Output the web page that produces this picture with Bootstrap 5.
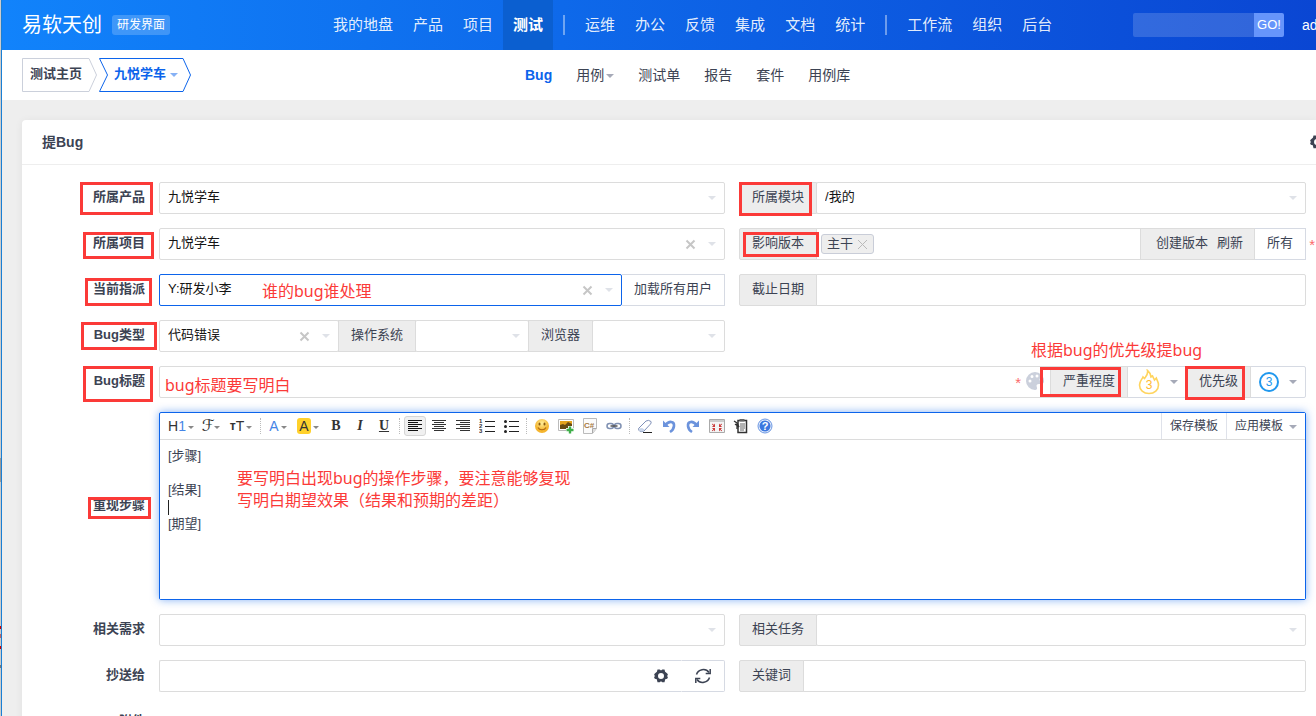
<!DOCTYPE html>
<html lang="zh-CN">
<head>
<meta charset="utf-8">
<meta name="viewport" content="width=device-width, initial-scale=1">
<title>提Bug - 易软天创</title>
<link href="https://cdn.jsdelivr.net/npm/bootstrap@5.3.0/dist/css/bootstrap.min.css" rel="stylesheet">
<style>
  :root { --ink: #3c4353; --line: #dcdcdc; --blue: #0c64eb; --note: #fb3a38; }
  body { font-family: "Liberation Sans", "Noto Sans CJK SC", sans-serif; font-size: 13px; line-height: 20px; color: var(--ink); background: #eee; }
  .app-shell { height: 100vh; overflow: hidden; }
  .window-edge { flex: 0 0 2px; border-right: 1px solid #1a7fd4; background: linear-gradient(#ccc 458px, #999 458px 482px, #ccc 482px 626px, #c00 626px 629px, #ccc 629px 634px, #b66 634px 638px, #ccc 638px 646px, #c00 646px 649px, #ccc 649px 665px, #777 665px 668px, #ccc 668px); }
  .app-main { flex: 1 1 0; min-width: 0; }

  /* top bar */
  .topbar { height: 50px; padding-left: 20px; background: linear-gradient(to right, #1183fb, #0a46d3); color: #fff; }
  .brand-area { flex: 0 0 301px; gap: 10px; }
  .brand-name { font-size: 20px; line-height: 50px; color: #fff; }
  .brand-tag { font-size: 12px; line-height: 20px; padding: 0 5px; border-radius: 3px; background: rgba(255,255,255,.2); color: #fff; }
  .topbar .nav-link { font-size: 15px; line-height: 50px; padding: 0 10px; color: rgba(255,255,255,.9); white-space: nowrap; }
  .topbar .nav-link.active { background: #0b5fd0; color: #fff; font-weight: 700; }
  .nav-split { width: 2px; height: 20px; margin: 0 10px; background: rgba(255,255,255,.4); }
  .search-box { width: 121px; height: 24px; border: 0; border-radius: 2px 0 0 2px; background: rgba(255,255,255,.16); color: #fff; }
  .search-go { width: 30px; height: 24px; padding: 0; border: 0; border-radius: 0 2px 2px 0; background: #6695fb; color: #fff; font-size: 13px; }
  .user-link { width: 14px; margin-left: 18px; overflow: hidden; white-space: nowrap; font-size: 14px; color: #fff; }

  /* second bar */
  .subbar { height: 50px; padding-left: 20px; background: #fff; }
  .crumb-area { flex: 0 0 491px; gap: 2px; }
  .crumb-item { height: 34px; line-height: 32px; padding-left: 8px; font-weight: 600; color: var(--ink); }
  .crumb-item svg { position: absolute; left: 0; top: 0; }
  .crumb-item span { position: relative; }
  .crumb-home { width: 75px; }
  .crumb-product { width: 92px; padding-left: 15px; color: var(--blue); }
  .subbar .nav-link { font-size: 14px; line-height: 20px; padding: 0 12px; color: var(--ink); }
  .subbar .nav-link.active { color: var(--blue); font-weight: 700; }
  .tri { display: inline-block; border: 4px solid transparent; border-top-color: #a6aab8; border-bottom: 0; vertical-align: middle; }
  .subbar .nav-link .tri { margin-left: 2px; }
  .crumb-product .tri { border-top-color: #86b1f5; }

  /* panel */
  .panel-box { margin: 20px 0 0 20px; background: #fff; border-radius: 4px 0 0 0; box-shadow: 0 1px 8px rgba(0,0,0,.06); min-height: 600px; }
  .panel-title { height: 45px; padding-left: 20px; border-bottom: 1px solid #eee; overflow: hidden; }
  .panel-title h1 { font-size: 14px; line-height: 20px; font-weight: 700; margin: 0; }
  .gear-link { width: 6px; height: 14px; overflow: hidden; color: var(--ink); }
  .gear-link svg { display: block; }
  .bug-form { display: grid; gap: 14px; padding: 17px 10px 0 0; }
  .field-line { display: grid; grid-template-columns: 123px minmax(0,566fr) minmax(0,567fr); column-gap: 14px; }
  .field-label { display: flex; align-items: center; justify-content: flex-end; position: relative; font-weight: 700; line-height: 30px; padding-bottom: 2px; }
  .field-wide { grid-column: span 2; position: relative; }

  .input-group, .pick-wrap { position: relative; min-height: 32px; }
  .form-control, .form-select, .input-group-text, .box-btn { height: 32px; font-size: 13px; line-height: 20px; border: 1px solid var(--line); border-radius: 2px; }
  .form-control, .form-select { padding: 4px 8px 6px; color: #141414; background-color: #fff; }
  .form-select { background-image: url("data:image/svg+xml,%3Csvg xmlns='http://www.w3.org/2000/svg' viewBox='0 0 8 4'%3E%3Cpath d='M0 0h8L4 4z' fill='%23dfe2e8'/%3E%3C/svg%3E"); background-size: 8px 4px; background-position: right 8px center; }
  .is-current { border-color: var(--blue); z-index: 2; }
  .input-group-text { padding: 4px 12px 6px; background: #ededed; color: var(--ink); position: relative; }
  .box-btn { padding: 4px 12px 6px; background: #fff; color: var(--ink); border-color: #d6dae3; margin-left: -1px; }
  .pick-wrap { flex: 1 1 0; min-width: 0; }
  .input-group > .pick-wrap:not(:first-child) { margin-left: -1px; }
  .grow-a { flex-grow: 180; } .grow-b { flex-grow: 114; } .grow-c { flex-grow: 133; }
  .clear-btn { position: absolute; right: 29px; top: 11px; width: 11px; height: 11px; padding: 0; border: 0; background: none; z-index: 3; display: flex; }
  .tag-area { flex: 1 1 0; border: 1px solid var(--line); margin-left: -1px; padding: 0 4px; height: 32px; }
  .tag-chip { height: 20px; line-height: 16px; padding: 0 5px; border: 1px solid #c9cdd8; border-radius: 3px; background: #eee; gap: 4px; }
  .tag-chip button { padding: 0; border: 0; background: none; display: flex; }
  .build-links { padding-left: 15px; padding-right: 11px; gap: 9px; }
  .build-links a { color: var(--ink); text-decoration: none; }
  .req-star { color: #fb6a6a; font-size: 15px; line-height: 20px; position: absolute; z-index: 4; }
  .star-out { right: -9px; top: 7px; }
  .star-in { right: 285px; top: 7px; }
  .palette-btn { position: absolute; right: 261px; top: 5px; width: 20px; height: 20px; padding: 0; border: 0; background: none; z-index: 4; display: flex; }
  .level-btn { width: 60px; padding: 0 8px 0 10px; display: flex; align-items: center; justify-content: space-between; }
  .prio-btn { width: 56px; padding: 0 8px; }
  .tool-btn { width: 44px; padding: 0; display: flex; align-items: center; justify-content: center; border-left-color: transparent; }

  /* rich text editor */
  .editor-box { border: 1px solid var(--blue); border-radius: 2px; box-shadow: 0 0 8px rgba(12,100,235,.5); background: #fff; position: relative; }
  .editor-bar { height: 27px; border-bottom: 1px solid var(--line); padding-left: 5px; }
  .ed-btn { width: 24px; height: 20px; padding: 0; border: 1px solid transparent; border-radius: 3px; background: none; color: #333; display: flex; align-items: center; justify-content: center; font-size: 14px; line-height: 18px; }
  .ed-mid { width: 28px; } .ed-big { width: 32px; }
  .ed-btn.chosen { width: 22px; margin: 0 1px; background: #f0f0f0; border-color: #d5d5d5; }
  .ed-btn .tri { border-width: 3px; border-bottom: 0; border-top-color: #888; margin-left: 2px; margin-top: 2px; }
  .ed-serif { font-family: "Liberation Serif", serif; font-weight: 700; }
  .ed-script { font-family: "DejaVu Sans", sans-serif; font-size: 16px; }
  .ed-script .tri { margin-left: 0; }
  .ed-blue { color: #4584e6; }
  .ed-split { width: 1px; height: 16px; margin: 0 3px; border-left: 1px dotted #bbb; }
  .ed-hilite { background: #ffd12b; border-radius: 3px; width: 14px; height: 16px; line-height: 16px; text-align: center; }
  .tpl-btn { height: 26px; padding: 0 8px; font-size: 12px; border: 0; border-left: 1px solid #dfe2ea; background: #fff; color: var(--ink); }
  .tpl-btn .tri { margin-left: 6px; }
  .editor-text { display: block; width: 100%; height: 159px; border: 0; resize: none; outline: 0; padding: 7px 8px; font-size: 13px; line-height: 17px; color: var(--ink); }
  .text-cursor { position: absolute; left: 8px; top: 87px; width: 1px; height: 15px; background: #222; }

  /* red review notes laid over the form */
  .note-box { position: absolute; border: 3px solid var(--note); z-index: 6; pointer-events: none; }
  .note-text { position: absolute; z-index: 6; color: var(--note); font: 16px/22px "Noto Sans", "Noto Sans CJK SC", sans-serif; white-space: nowrap; margin: 0; pointer-events: none; }
  .on-product { right: -8px; top: 0; width: 73px; height: 33px; }
  .on-project { right: -9px; top: 4px; width: 71px; height: 27px; }
  .on-assign { right: -7px; top: 4px; width: 67px; height: 28px; }
  .on-type { right: -12px; top: 2px; width: 76px; height: 28px; }
  .on-title { right: -8px; top: 0; width: 70px; height: 36px; }
  .on-steps { right: -6px; top: 85px; width: 63px; height: 22px; }
  .on-module { left: -1px; top: -1px; width: 73px; height: 34px; }
  .on-build { left: 3px; top: 3px; width: 76px; height: 25px; }
  .on-severity { left: -11px; top: 0; width: 81px; height: 30px; }
  .on-priority { left: -2px; top: -1px; width: 60px; height: 34px; }
  .say-assign { left: 104px; top: 6px; }
  .say-title { left: 6px; top: 8px; }
  .say-priority { left: -20px; top: -28px; }
  .say-steps { left: 77px; top: 54px; }
</style>
</head>
<body>
<svg width="0" height="0" class="position-absolute" aria-hidden="true">
  <symbol id="i-x" viewBox="0 0 11 11"><path d="M1.500 1.500l8 8M9.500 1.500l-8 8" stroke="#c6c6c6" stroke-width="2" fill="none"/></symbol>
  <symbol id="i-gear" viewBox="0 0 14 14"><path fill="currentColor" fill-rule="evenodd" d="M3.500.6h2.200l1.300 1 1.300-1h2.200l.6 2.200L13.300 4.400 14 6l-1.200 1 1.200 1-.8 1.700-2 .6-.7 2.900H8.300l-1.300-1-1.300 1H3.500l-.7-2.900-2-.6L0 8l1.200-1L0 6l.8-1.600 2.100-1.600zM7 4a3 3 0 1 0 0 6 3 3 0 0 0 0-6z"/></symbol>
</svg>
<div class="app-shell d-flex">
  <div class="window-edge"></div>
  <div class="app-main">
    <header class="topbar d-flex align-items-center">
      <div class="brand-area d-flex align-items-center">
        <a href="#" class="brand-name text-decoration-none">易软天创</a>
        <span class="brand-tag">研发界面</span>
      </div>
      <nav class="nav flex-nowrap align-items-center" aria-label="主导航">
        <a class="nav-link" href="#">我的地盘</a>
        <a class="nav-link" href="#">产品</a>
        <a class="nav-link" href="#">项目</a>
        <a class="nav-link active" href="#">测试</a>
        <span class="nav-split"></span>
        <a class="nav-link" href="#">运维</a>
        <a class="nav-link" href="#">办公</a>
        <a class="nav-link" href="#">反馈</a>
        <a class="nav-link" href="#">集成</a>
        <a class="nav-link" href="#">文档</a>
        <a class="nav-link" href="#">统计</a>
        <span class="nav-split"></span>
        <a class="nav-link" href="#">工作流</a>
        <a class="nav-link" href="#">组织</a>
        <a class="nav-link" href="#">后台</a>
      </nav>
      <form class="d-flex ms-auto" onsubmit="return false">
        <input class="search-box" type="text" aria-label="搜索">
        <button class="search-go" type="submit">GO!</button>
      </form>
      <a href="#" class="user-link text-decoration-none">admin</a>
    </header>

    <div class="subbar d-flex align-items-center">
      <div class="crumb-area d-flex">
        <a href="#" class="crumb-item crumb-home position-relative text-decoration-none">
          <svg width="75" height="34" fill="none" stroke="#cbd0db"><path d="M.5.5H67L74.500 17 67 33.500H.5z"/></svg><span>测试主页</span>
        </a>
        <a href="#" class="crumb-item crumb-product position-relative text-decoration-none">
          <svg width="92" height="34" fill="none" stroke="#0c64eb"><path d="M.5.5H84L91.500 17 84 33.500H.5L8.500 17z"/></svg><span>九悦学车 <i class="tri"></i></span>
        </a>
      </div>
      <nav class="nav flex-nowrap" aria-label="测试导航">
        <a class="nav-link active" href="#">Bug</a>
        <a class="nav-link" href="#">用例<i class="tri"></i></a>
        <a class="nav-link" href="#">测试单</a>
        <a class="nav-link" href="#">报告</a>
        <a class="nav-link" href="#">套件</a>
        <a class="nav-link" href="#">用例库</a>
      </nav>
    </div>

    <main class="panel-box">
      <div class="panel-title d-flex align-items-center justify-content-between">
        <h1>提Bug</h1>
        <a href="#" class="gear-link" aria-label="设置"><svg width="14" height="14"><use href="#i-gear"/></svg></a>
      </div>
      <form class="bug-form" onsubmit="return false">
        <div class="field-line">
          <label class="field-label" for="product">所属产品<i class="note-box on-product"></i></label>
          <div class="pick-wrap"><select id="product" class="form-select"><option>九悦学车</option></select></div>
          <div class="input-group flex-nowrap">
            <label class="input-group-text" for="module">所属模块<i class="note-box on-module"></i></label>
            <div class="pick-wrap"><select id="module" class="form-select"><option>/我的</option></select></div>
          </div>
        </div>

        <div class="field-line">
          <label class="field-label" for="project">所属项目<i class="note-box on-project"></i></label>
          <div class="pick-wrap">
            <select id="project" class="form-select"><option>九悦学车</option></select>
            <button type="button" class="clear-btn" aria-label="清除"><svg width="11" height="11"><use href="#i-x"/></svg></button>
          </div>
          <div class="input-group flex-nowrap">
            <span class="input-group-text">影响版本<i class="note-box on-build"></i></span>
            <div class="tag-area d-flex align-items-center">
              <span class="tag-chip d-flex align-items-center">主干<button type="button" aria-label="移除主干"><svg width="11" height="11" stroke="#b9b9b9" fill="none"><path d="M1 1l9 9M10 1l-9 9"/></svg></button></span>
            </div>
            <span class="input-group-text build-links"><a href="#">创建版本</a><a href="#">刷新</a></span>
            <button type="button" class="box-btn">所有</button>
            <span class="req-star star-out">*</span>
          </div>
        </div>

        <div class="field-line">
          <label class="field-label" for="assign">当前指派<i class="note-box on-assign"></i></label>
          <div class="input-group flex-nowrap">
            <div class="pick-wrap">
              <select id="assign" class="form-select is-current"><option>Y:研发小李</option></select>
              <button type="button" class="clear-btn" aria-label="清除"><svg width="11" height="11"><use href="#i-x"/></svg></button>
            </div>
            <button type="button" class="box-btn border-start-0 ms-0">加载所有用户</button>
            <p class="note-text say-assign">谁的bug谁处理</p>
          </div>
          <div class="input-group flex-nowrap">
            <label class="input-group-text" for="deadline">截止日期</label>
            <input id="deadline" type="text" class="form-control">
          </div>
        </div>

        <div class="field-line">
          <label class="field-label" for="bugtype">Bug类型<i class="note-box on-type"></i></label>
          <div class="input-group flex-nowrap">
            <div class="pick-wrap grow-a">
              <select id="bugtype" class="form-select"><option>代码错误</option></select>
              <button type="button" class="clear-btn" aria-label="清除"><svg width="11" height="11"><use href="#i-x"/></svg></button>
            </div>
            <label class="input-group-text" for="os">操作系统</label>
            <div class="pick-wrap grow-b"><select id="os" class="form-select"><option></option></select></div>
            <label class="input-group-text" for="browser">浏览器</label>
            <div class="pick-wrap grow-c"><select id="browser" class="form-select"><option></option></select></div>
          </div>
        </div>

        <div class="field-line">
          <label class="field-label" for="title">Bug标题<i class="note-box on-title"></i></label>
          <div class="field-wide">
            <div class="input-group flex-nowrap">
              <input id="title" type="text" class="form-control">
              <span class="req-star star-in">*</span>
              <button type="button" class="palette-btn" aria-label="标题颜色">
                <svg width="20" height="20" viewBox="0 0 20 20"><path fill="#cbd0dc" fill-rule="evenodd" d="M10 1a9 9 0 0 0 0 18c2 0 2.500-1.500 1.800-3-.8-1.800.2-3 2.200-3h2.500C18.500 13 19 11.500 19 10a9 9 0 0 0-9-9zM5 8.500a1.500 1.500 0 1 1 0 3 1.500 1.500 0 0 1 0-3zM7 4a1.500 1.500 0 1 1 0 3 1.500 1.500 0 0 1 0-3zm5-.5a1.500 1.500 0 1 1 0 3 1.500 1.500 0 0 1 0-3zm4 3.500a1.500 1.500 0 1 1 0 3 1.500 1.500 0 0 1 0-3z"/></svg>
              </button>
              <span class="input-group-text">严重程度<i class="note-box on-severity"></i><b class="note-text say-priority fw-normal">根据bug的优先级提bug</b></span>
              <button type="button" class="box-btn level-btn" aria-label="严重程度 3">
                <svg width="22" height="26" viewBox="0 0 22 26"><path fill="none" stroke="#ffd45e" stroke-width="1.600" d="M9.500 1.500c.8 4-1.200 5.500-3 8L5 8c-1 2.500-3.500 4-3.500 8 0 5 4 8.500 9.500 8.500s9.500-3.500 9.500-8.500c0-3-1.500-4.500-2.200-7l-1.800 2-2-4-1.500 1C12.500 5 11.500 3 9.500 1.500z"/><text x="11" y="20" text-anchor="middle" font-size="12" fill="#ffb92e">3</text></svg>
                <i class="tri"></i>
              </button>
              <span class="input-group-text">优先级<i class="note-box on-priority"></i></span>
              <button type="button" class="box-btn level-btn prio-btn" aria-label="优先级 3">
                <svg width="20" height="20" viewBox="0 0 20 20"><circle cx="10" cy="10" r="9" fill="none" stroke="#2098ee" stroke-width="2"/><text x="10" y="14" text-anchor="middle" font-size="12" fill="#2098ee">3</text></svg>
                <i class="tri"></i>
              </button>
            </div>
            <p class="note-text say-title">bug标题要写明白</p>
          </div>
        </div>

        <div class="field-line">
          <label class="field-label" for="steps">重现步骤<i class="note-box on-steps"></i></label>
          <div class="field-wide editor-box">
            <div class="editor-bar d-flex align-items-center">
              <button type="button" class="ed-btn ed-big">H<span class="ed-blue">1</span><i class="tri"></i></button>
              <button type="button" class="ed-btn ed-mid ed-script">ℱ<i class="tri"></i></button>
              <button type="button" class="ed-btn ed-big"><small class="fw-bold">т</small>T<i class="tri"></i></button>
              <span class="ed-split"></span>
              <button type="button" class="ed-btn ed-mid"><span class="ed-blue">A</span><i class="tri"></i></button>
              <button type="button" class="ed-btn ed-big"><span class="ed-hilite">A</span><i class="tri"></i></button>
              <button type="button" class="ed-btn ed-serif">B</button>
              <button type="button" class="ed-btn ed-serif fst-italic">I</button>
              <button type="button" class="ed-btn ed-serif text-decoration-underline">U</button>
              <span class="ed-split"></span>
              <button type="button" class="ed-btn chosen" aria-label="左对齐"><svg width="16" height="14" stroke="#111"><path d="M1 1.500h14M1 3.500h10M1 5.500h14M1 7.500h10M1 9.500h14M1 11.500h10"/></svg></button>
              <button type="button" class="ed-btn" aria-label="居中"><svg width="16" height="14" stroke="#333"><path d="M1 1.500h14M3 3.500h10M1 5.500h14M3 7.500h10M1 9.500h14M3 11.500h10"/></svg></button>
              <button type="button" class="ed-btn" aria-label="右对齐"><svg width="16" height="14" stroke="#333"><path d="M1 1.500h14M5 3.500h10M1 5.500h14M5 7.500h10M1 9.500h14M5 11.500h10"/></svg></button>
              <button type="button" class="ed-btn" aria-label="编号"><svg width="16" height="16"><path stroke="#222" d="M6 3.500h10M6 8.500h10M6 13.500h10"/><g font-size="6" font-weight="700" fill="#333"><text x="0" y="5">1</text><text x="0" y="10">2</text><text x="0" y="15">3</text></g></svg></button>
              <button type="button" class="ed-btn" aria-label="项目符号"><svg width="16" height="16"><path stroke="#222" d="M6 3.500h10M6 8.500h10M6 13.500h10"/><g fill="#222"><circle cx="2.500" cy="3.500" r="1.500"/><circle cx="2.500" cy="8.500" r="1.500"/><circle cx="2.500" cy="13.500" r="1.500"/></g></svg></button>
              <span class="ed-split"></span>
              <button type="button" class="ed-btn" aria-label="表情"><svg width="16" height="16"><defs><radialGradient id="gs" cy=".3"><stop offset="0" stop-color="#ffee9a"/><stop offset="1" stop-color="#f5b52e"/></radialGradient></defs><circle cx="8" cy="8" r="7" fill="url(#gs)"/><ellipse cx="5.500" cy="6" rx="1" ry="1.500" fill="#8a5a10"/><ellipse cx="10.500" cy="6" rx="1" ry="1.500" fill="#8a5a10"/><path d="M4 9.500c1.500 3 6.500 3 8 0" fill="none" stroke="#b06a12" stroke-width="1.200"/></svg></button>
              <button type="button" class="ed-btn" aria-label="图片"><svg width="16" height="16"><path fill="#fff" stroke="#bbb" d="M.5 1.500h15v11H.5z"/><path fill="#e5a31d" d="M2 3h12v8H2z"/><path fill="#4a3412" d="M2 11V7l3-1 2 1 3-3 4 2v5z" opacity=".8"/><path d="M12 8v8M8 12h8" stroke="#fff" stroke-width="4"/><path d="M12 8.500v7M8.500 12h7" stroke="#3fae49" stroke-width="2.400"/></svg></button>
              <button type="button" class="ed-btn" aria-label="代码"><svg width="16" height="16"><path fill="#fbfbfb" stroke="#bbb" d="M1.500.5h13v10l-4 5h-9z"/><path d="M10.500 15v-4.500h4" fill="#ddd" stroke="#aaa"/><text x="2" y="10" font-size="8" font-weight="700" fill="#a5783c">C#</text></svg></button>
              <button type="button" class="ed-btn" aria-label="链接"><svg width="16" height="16" fill="none" stroke="#7f90b2" stroke-width="1.500"><rect x="1" y="5.500" width="6.500" height="5" rx="2.500"/><rect x="8.500" y="5.500" width="6.500" height="5" rx="2.500"/><path d="M4.500 8h7" stroke="#555"/></svg></button>
              <span class="ed-split"></span>
              <button type="button" class="ed-btn" aria-label="清除格式"><svg width="16" height="16"><path d="M6 14.500h9" stroke="#222"/><path fill="#fff" stroke="#7f90b8" stroke-linejoin="round" d="M1.500 10.500l7.500-7.500q2.500-1.500 5 .5.500 1.500-.5 2.500l-6.500 7q-2 1-4 .5-1.500-1-1.500-3z"/><path fill="#c9d5ea" d="M2 10.500l3-.5 2.500 1.500-1 1.500q-2 1-3.500.3-1-1-1-2.800z"/></svg></button>
              <button type="button" class="ed-btn" aria-label="撤销"><svg width="16" height="16"><path fill="none" stroke="#6c93dc" stroke-width="2.600" d="M4.500 7C8 2.500 13.500 3 13 8c-.3 3-1.500 4.500-4 6"/><path fill="#6c93dc" d="M2 2.500v6.500h6.500z"/></svg></button>
              <button type="button" class="ed-btn" aria-label="重做"><svg width="16" height="16"><path fill="none" stroke="#6c93dc" stroke-width="2.600" d="M11.500 7C8 2.500 2.500 3 3 8c.3 3 1.500 4.500 4 6"/><path fill="#6c93dc" d="M14 2.500v6.500H7.500z"/></svg></button>
              <button type="button" class="ed-btn" aria-label="全屏"><svg width="16" height="16"><path fill="#f4f4f4" stroke="#aaa" d="M.5 1.500h15v13H.5z"/><path fill="#ccc" d="M1 2h14v2H1z"/><path stroke="#cb4a4a" fill="none" d="M3 6l3 2M13 6l-3 2M3 13l3-2.500M13 13l-3-2.500"/><path fill="#cb3a3a" d="M6 5.500V9H3zM10 5.500V9h3zM6 13.500V10H3zM10 13.500V10h3z"/></svg></button>
              <button type="button" class="ed-btn" aria-label="源代码"><svg width="16" height="16"><path fill="#fff" stroke="#333" stroke-width="1.500" d="M5 2.500h8.500v12H5z"/><path fill="#666" d="M6.500 1h5v2.500h-5z"/><path stroke="#666" d="M7 6h5M7 8h5M7 10h5M7 12h4"/><path stroke="#333" stroke-width="1.300" fill="none" d="M1 3l3 2 2 4-4-3M4 5v6"/></svg></button>
              <button type="button" class="ed-btn" aria-label="帮助"><svg width="16" height="16"><circle cx="8" cy="8" r="7" fill="#e7effc" stroke="#6c97e2"/><circle cx="8" cy="8" r="5.500" fill="#3b77df"/><text x="8" y="12" text-anchor="middle" font-size="11" font-weight="700" fill="#fff">?</text></svg></button>
              <button type="button" class="tpl-btn ms-auto">保存模板</button>
              <button type="button" class="tpl-btn">应用模板<i class="tri"></i></button>
            </div>
            <textarea id="steps" class="editor-text">[步骤]

[结果]

[期望]</textarea>
            <i class="text-cursor"></i>
            <p class="note-text say-steps">要写明白出现bug的操作步骤，要注意能够复现<br>写明白期望效果（结果和预期的差距）</p>
          </div>
        </div>

        <div class="field-line">
          <label class="field-label" for="story">相关需求</label>
          <div class="pick-wrap"><select id="story" class="form-select"><option></option></select></div>
          <div class="input-group flex-nowrap">
            <label class="input-group-text" for="task">相关任务</label>
            <div class="pick-wrap"><select id="task" class="form-select"><option></option></select></div>
          </div>
        </div>

        <div class="field-line">
          <label class="field-label" for="mailto">抄送给</label>
          <div class="input-group flex-nowrap">
            <input id="mailto" type="text" class="form-control border-end-0">
            <button type="button" class="box-btn tool-btn border-end-0" aria-label="联系人设置"><svg width="14" height="14"><use href="#i-gear"/></svg></button>
            <button type="button" class="box-btn tool-btn" aria-label="刷新"><svg width="18" height="16" viewBox="0 0 18 16" fill="none" stroke="#3c4353" stroke-width="1.500"><path d="M2.500 6.500C4 1.500 11.500-.5 15 4.500M15.500 9.500c-1.500 5-9 7-12.500 2"/><path d="M16.200 1v4.500h-4.500M1.800 15v-4.500h4.500"/></svg></button>
          </div>
          <div class="input-group flex-nowrap">
            <label class="input-group-text" for="keywords">关键词</label>
            <input id="keywords" type="text" class="form-control">
          </div>
        </div>

        <div class="field-line">
          <label class="field-label" for="files">附件</label>
          <div class="position-relative"><input id="files" type="file" class="visually-hidden"></div>
        </div>
      </form>
    </main>
  </div>
</div>
<script src="https://cdn.jsdelivr.net/npm/bootstrap@5.3.0/dist/js/bootstrap.bundle.min.js"></script>
</body>
</html>
